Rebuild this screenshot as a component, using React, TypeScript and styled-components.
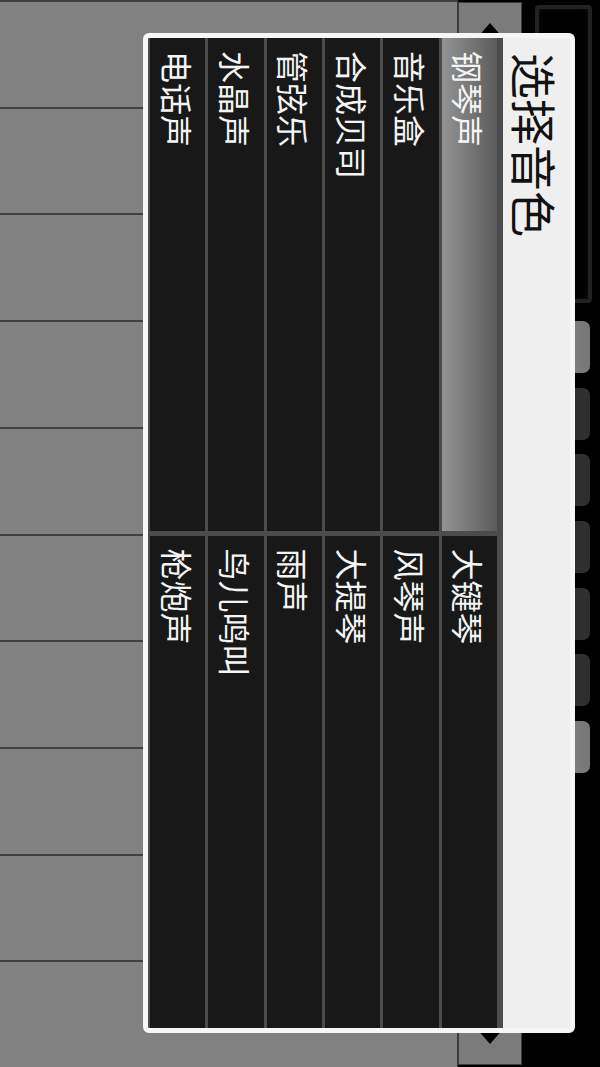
import React from 'react'
import styled, { createGlobalStyle } from 'styled-components'

const GlobalStyle = createGlobalStyle`
  html,
  body {
    margin: 0;
    padding: 0;
    background: #000;
    overflow: hidden;
  }
  body {
    font-family: 'Noto Sans CJK SC', 'Noto Sans', sans-serif;
  }
`

// the app runs in landscape, the phone shows it turned a quarter clockwise
const Viewport = styled.div`
  width: 600px;
  height: 1067px;
  overflow: hidden;
`

const Screen = styled.div`
  position: relative;
  width: 1067px;
  height: 600px;
  display: flex;
  flex-direction: column;
  background: #000;
  transform-origin: 0 0;
  transform: translateX(600px) rotate(90deg);
`

const TopBar = styled.div`
  height: 78px;
  flex: none;
  display: flex;
  align-items: flex-start;
  padding: 8px 0 0 5px;
  box-sizing: border-box;
`

const Display = styled.div`
  width: 298px;
  height: 57px;
  box-sizing: border-box;
  border: 4px solid #222;
  border-radius: 4px;
  background: #000;
  box-shadow: inset 0 0 6px #111;
`

const Presets = styled.div`
  display: flex;
  gap: 14.7px;
  margin: 2px 0 0 18px;
`

const PresetButton = styled.div<{ $light: boolean }>`
  width: 52px;
  height: 56px;
  border-radius: 7px;
  background: ${(p) =>
    p.$light ? 'linear-gradient(to bottom, #777, #8c8c8c)' : '#2f2f2f'};
`

const Strip = styled.div`
  height: 64px;
  flex: none;
  display: flex;
  justify-content: space-between;
`

const ArrowButton = styled.div<{ $side: 'left' | 'right' }>`
  width: 58px;
  margin: ${(p) => (p.$side === 'left' ? '0 0 0 2px' : '0 2px 0 0')};
  box-sizing: border-box;
  border: 1px solid #3c3c3c;
  background: #7b7b7b;
  display: flex;
  align-items: center;
  justify-content: center;
`

const Keyboard = styled.div`
  flex: 1;
  display: flex;
  border-top: 1px solid #3a3a3a;
`

const Key = styled.div`
  flex: 1;
  background: #818181;
  border-left: 2px solid #3f3f3f;
`

const Dialog = styled.div`
  position: absolute;
  top: 25px;
  left: 33px;
  width: 1000px;
  height: 432px;
  box-sizing: border-box;
  border: 5px solid #f6f6f6;
  border-radius: 6px;
  background: #efefef;
  display: flex;
  flex-direction: column;
  overflow: hidden;
`

const Title = styled.div`
  height: 67px;
  flex: none;
  display: flex;
  align-items: center;
  padding-left: 15px;
  font-size: 46px;
  line-height: 1;
  color: #111;
`

const Grid = styled.div`
  flex: 1;
  display: grid;
  grid-template-columns: 1fr 1fr;
  grid-template-rows: repeat(6, 1fr);
  grid-auto-flow: column;
  column-gap: 5px;
  row-gap: 3px;
  padding: 6px 0 2px;
  background: #4c4c4c;
`

const Cell = styled.div<{ $selected: boolean }>`
  display: flex;
  align-items: center;
  padding-left: 13px;
  font-size: 32px;
  line-height: 1;
  color: #f4f4f4;
  background: ${(p) =>
    p.$selected
      ? 'linear-gradient(to bottom, #5b5b5b, #7a7a7a 55%, #939393)'
      : '#181818'};
`

const Triangle = ({ dir }: { dir: 'left' | 'right' }) => (
  <svg width="16" height="28" viewBox="0 0 16 28">
    <polygon
      points={dir === 'left' ? '0,14 16,0 16,28' : '16,14 0,0 0,28'}
      fill="#000"
    />
  </svg>
)

const voices = [
  '钢琴声',
  '音乐盒',
  '合成贝司',
  '管弦乐',
  '水晶声',
  '电话声',
  '大键琴',
  '风琴声',
  '大提琴',
  '雨声',
  '鸟儿鸣叫',
  '枪炮声',
]

const presetLight = [true, false, false, false, false, false, true]

const App: React.FC = () => {
  const selected = 0
  return (
    <Viewport>
      <GlobalStyle />
      <Screen>
        <TopBar>
          <Display />
          <Presets>
            {presetLight.map((light, i) => (
              <PresetButton key={i} $light={light} />
            ))}
          </Presets>
        </TopBar>
        <Strip>
          <ArrowButton $side="left">
            <Triangle dir="left" />
          </ArrowButton>
          <ArrowButton $side="right">
            <Triangle dir="right" />
          </ArrowButton>
        </Strip>
        <Keyboard>
          {Array.from({ length: 10 }).map((_, i) => (
            <Key key={i} />
          ))}
        </Keyboard>

        <Dialog>
          <Title>选择音色</Title>
          <Grid>
            {voices.map((v, i) => (
              <Cell key={v} $selected={i === selected}>
                {v}
              </Cell>
            ))}
          </Grid>
        </Dialog>
      </Screen>
    </Viewport>
  )
}

export default App
